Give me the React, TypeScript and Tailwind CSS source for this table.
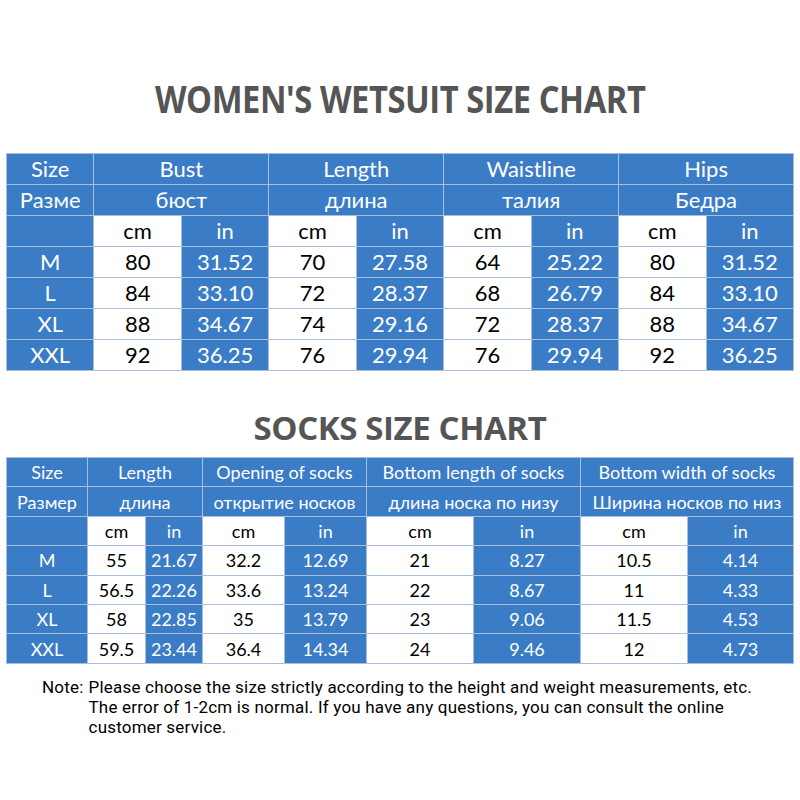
const wetsuitRows = [
  ['M', '80', '31.52', '70', '27.58', '64', '25.22', '80', '31.52'],
  ['L', '84', '33.10', '72', '28.37', '68', '26.79', '84', '33.10'],
  ['XL', '88', '34.67', '74', '29.16', '72', '28.37', '88', '34.67'],
  ['XXL', '92', '36.25', '76', '29.94', '76', '29.94', '92', '36.25'],
];

const socksRows = [
  ['M', '55', '21.67', '32.2', '12.69', '21', '8.27', '10.5', '4.14'],
  ['L', '56.5', '22.26', '33.6', '13.24', '22', '8.67', '11', '4.33'],
  ['XL', '58', '22.85', '35', '13.79', '23', '9.06', '11.5', '4.53'],
  ['XXL', '59.5', '23.44', '36.4', '14.34', '24', '9.46', '12', '4.73'],
];

const wetsuitHeads = [
  ['Bust', 'бюст'],
  ['Length', 'длина'],
  ['Waistline', 'талия'],
  ['Hips', 'Бедра'],
];

const socksHeads = [
  ['Length', 'длина'],
  ['Opening of socks', 'открытие носков'],
  ['Bottom length of socks', 'длина носка по низу'],
  ['Bottom width of socks', 'Ширина носков по низ'],
];

function Cell({ children, white, span }: { children?: React.ReactNode; white?: boolean; span?: boolean }) {
  return (
    <div
      className={`flex items-center justify-center leading-none ${span ? 'col-span-2' : ''} ${
        white ? 'bg-white text-black' : 'bg-[#3b7cc6] text-white'
      }`}
    >
      {children}
    </div>
  );
}

function SizeTable({
  heads,
  rows,
  sizeLabel,
  gridClass,
}: {
  heads: string[][];
  rows: string[][];
  sizeLabel: string;
  gridClass: string;
}) {
  return (
    <div className={`grid gap-px p-px bg-[#a9bedb] ${gridClass}`}>
      <Cell>Size</Cell>
      {heads.map((h) => (
        <Cell key={h[0]} span>
          {h[0]}
        </Cell>
      ))}
      <Cell>{sizeLabel}</Cell>
      {heads.map((h) => (
        <Cell key={h[1]} span>
          {h[1]}
        </Cell>
      ))}
      <Cell />
      {heads.flatMap((h) => [
        <Cell key={h[0] + 'cm'} white>
          cm
        </Cell>,
        <Cell key={h[0] + 'in'}>in</Cell>,
      ])}
      {rows.map((r) =>
        r.map((v, i) => (
          <Cell key={r[0] + i} white={i > 0 && i % 2 === 1}>
            {v}
          </Cell>
        ))
      )}
    </div>
  );
}

export default function App() {
  return (
    <div className="w-[800px] h-[800px] bg-white overflow-hidden">
      <div className="pt-[79px] flex justify-center">
        <h1 className="inline-block scale-x-[0.86] whitespace-nowrap text-[38px] leading-none font-bold text-[#555555] font-['Open_Sans',sans-serif] tracking-[-0.5px]">
          WOMEN'S WETSUIT SIZE CHART
        </h1>
      </div>
      <div className="mt-[36px] ml-[6px] w-[788px] font-['Lato',sans-serif] text-[22px]">
        <SizeTable
          heads={wetsuitHeads}
          rows={wetsuitRows}
          sizeLabel="Разме"
          gridClass="grid-cols-9 auto-rows-[30px]"
        />
      </div>
      <h2 className="mt-[40px] text-center text-[33px] leading-none font-bold text-[#555555] font-['Open_Sans',sans-serif] tracking-[-0.4px]">
        SOCKS SIZE CHART
      </h2>
      <div className="mt-[13px] ml-[6px] w-[788px] font-['Lato',sans-serif] text-[18px]">
        <SizeTable
          heads={socksHeads}
          rows={socksRows}
          sizeLabel="Размер"
          gridClass="grid-cols-[80px_57px_56px_81px_81px_106px_106px_106px_105px] auto-rows-[28.4px]"
        />
      </div>
      <div className="mt-[13px] ml-[42px] flex gap-[5px] text-[17px] leading-[20px] tracking-[0.2px] text-black font-['Roboto',sans-serif]">
        <span>Note:</span>
        <p>
          Please choose the size strictly according to the height and weight measurements, etc.
          <br />
          The error of 1-2cm is normal. If you have any questions, you can consult the online
          <br />
          customer service.
        </p>
      </div>
    </div>
  );
}
